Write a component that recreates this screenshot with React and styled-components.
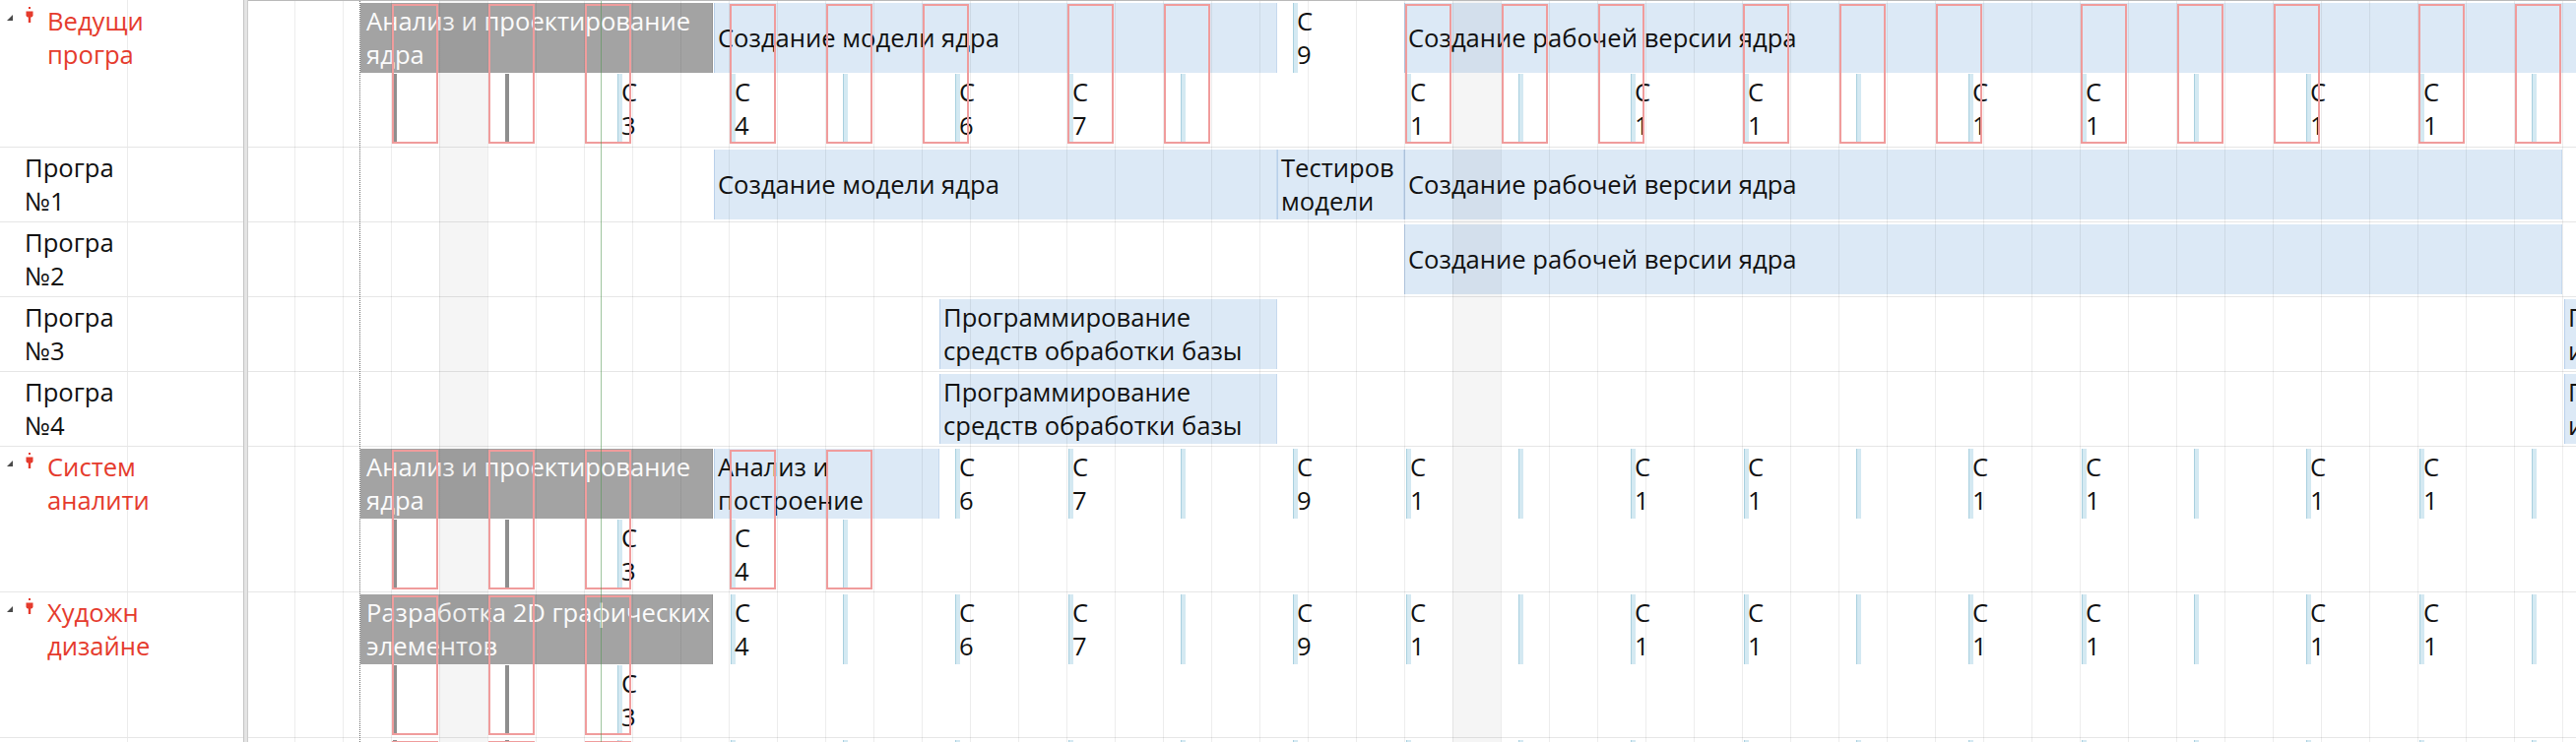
import React from "react";
import styled, { createGlobalStyle } from "styled-components";

const GlobalStyle = createGlobalStyle`
  html, body {
    margin: 0;
    padding: 0;
    background: #fff;
  }
  body {
    overflow: hidden;
    font-family: "Open Sans", "Noto Sans", sans-serif;
  }
`;

// page x where the chart canvas begins, and the day grid
const CHART_X = 252;
const DAY = 49;
const DAY0 = 250;

const StyledApp = styled.div`
  display: flex;
  width: 2616px;
  height: 754px;
  overflow: hidden;
  font-size: 25.6px;
  line-height: 34px;
  color: #111;
`;

const StyledLeftPanel = styled.div`
  flex: none;
  width: 247px;
  padding-top: 1px;
  display: flex;
  flex-direction: column;
  background-image: linear-gradient(
    to right,
    transparent 129px,
    #ececec 129px,
    #ececec 130px,
    transparent 130px
  );
`;

const StyledLeftRow = styled.div`
  flex: none;
  box-sizing: border-box;
  height: ${(p) => p.$h}px;
  border-bottom: 1px solid #e6e6e6;
  display: grid;
  grid-template-columns: ${(p) => (p.$lead ? "19px 22px 1fr" : "1fr")};
  align-items: start;
  padding-left: ${(p) => (p.$lead ? 7 : 25)}px;
  color: ${(p) => (p.$lead ? "#e53b2d" : "#111")};
`;

const StyledToggle = styled.span`
  width: 0;
  height: 0;
  margin-top: 14px;
  border-left: 6px solid transparent;
  border-bottom: 6px solid #4a4a4a;
`;

const StyledPerson = styled.svg`
  margin-top: 6px;
  display: block;
`;

const StyledName = styled.div`
  padding-top: 4px;
  white-space: pre;
`;

const StyledSplitter = styled.div`
  flex: none;
  width: 5px;
  box-sizing: border-box;
  border-left: 1px solid #c4c4c4;
  border-right: 1px solid #cdcdcd;
  background: #e4e4e4;
`;

const StyledChart = styled.div`
  position: relative;
  flex: 1;
  min-width: 0;
  overflow: hidden;
  border-top: 1px solid #b9b9b9;
  display: flex;
  flex-direction: column;
`;

const StyledChartRow = styled.div`
  position: relative;
  flex: none;
  box-sizing: border-box;
  height: ${(p) => p.$h}px;
  border-bottom: 1px solid #e6e6e6;
`;

const StyledBar = styled.div`
  position: absolute;
  top: 2px;
  height: 71px;
  box-sizing: border-box;
  display: flex;
  align-items: center;
  overflow: hidden;
  white-space: pre;
  padding-left: ${(p) => (p.$done ? 5 : 3)}px;
  padding-top: 1px;
  background: ${(p) => (p.$done ? "#a3a3a3" : "#dce9f6")};
  color: ${(p) => (p.$done ? "#fbfbfb" : "#111")};
  border-left: 1px solid ${(p) => (p.$done ? "#a3a3a3" : "#b9d0ea")};
  border-right: 1px solid ${(p) => (p.$done ? "#939393" : "#c6d9ee")};
`;

const StyledTick = styled.div`
  position: absolute;
  top: ${(p) => (p.$half === "top" ? 2 : 74)}px;
  height: 71px;
  width: ${(p) => (p.$done ? 4 : 5)}px;
  box-sizing: border-box;
  background: ${(p) => (p.$done ? "#8e8e8e" : "#d4e9f2")};
  border-left: 1px solid ${(p) => (p.$done ? "#8e8e8e" : "#a9d0df")};
`;

const StyledTickLabel = styled.div`
  position: absolute;
  left: 3px;
  top: 2px;
  white-space: pre;
  color: #111;
`;

const StyledConflict = styled.div`
  position: absolute;
  top: 3px;
  height: 142px;
  width: 47px;
  box-sizing: border-box;
  border: 2px solid #f09c9c;
`;

const StyledGridLines = styled.div`
  position: absolute;
  inset: 0;
  pointer-events: none;
  background-image: repeating-linear-gradient(
    to right,
    transparent 0,
    transparent 47px,
    rgba(0, 0, 0, 0.07) 47px,
    rgba(0, 0, 0, 0.07) 48px,
    transparent 48px,
    transparent 49px
  );
`;

const StyledShade = styled.div`
  position: absolute;
  top: 0;
  bottom: 0;
  width: ${DAY}px;
  background: rgba(0, 0, 0, 0.04);
  pointer-events: none;
`;

const StyledTodayLine = styled.div`
  position: absolute;
  top: 0;
  bottom: 0;
  width: 1px;
  background: rgba(80, 150, 80, 0.55);
  pointer-events: none;
`;

const StyledStartLine = styled.div`
  position: absolute;
  top: 0;
  bottom: 0;
  width: 0;
  border-left: 1px dotted #6e6e6e;
  pointer-events: none;
`;

const cx = (pageX) => pageX - CHART_X;

const LABELS = ["", "", "3", "4", "", "6", "7", "", "9", "1", "", "1", "1", "", "1", "1", "", "1", "1", ""];
const TICKS = LABELS.map((label, i) => ({
  i,
  x: Math.round(398.8 + 114.33 * i),
  label,
  done: i < 2,
}));

const gray = (x, w, text) => ({ x, w, text, done: true });
const blue = (x, w, text) => ({ x, w, text, done: false });

const ROWS = [
  {
    h: 149,
    lead: true,
    name: "Ведущи\nпрогра",
    bars: [
      gray(366, 358, "Анализ и проектирование\nядра"),
      blue(725, 572, "Создание модели ядра"),
      blue(1426, 1220, "Создание рабочей версии ядра"),
    ],
    half: (i) => (i === 8 ? "top" : "bottom"),
  },
  {
    h: 76,
    name: "Програ\n№1",
    bars: [
      blue(725, 572, "Создание модели ядра"),
      blue(1297, 129, "Тестиров\nмодели"),
      blue(1426, 1176, "Создание рабочей версии ядра"),
    ],
  },
  { h: 76, name: "Програ\n№2", bars: [blue(1426, 1176, "Создание рабочей версии ядра")] },
  {
    h: 76,
    name: "Програ\n№3",
    bars: [blue(954, 343, "Программирование\nсредств обработки базы"), blue(2604, 40, "П\nи")],
  },
  {
    h: 76,
    name: "Програ\n№4",
    bars: [blue(954, 343, "Программирование\nсредств обработки базы"), blue(2604, 40, "П\nи")],
  },
  {
    h: 148,
    lead: true,
    name: "Систем\nаналити",
    bars: [gray(366, 358, "Анализ и проектирование\nядра"), blue(725, 229, "Анализ и\nпостроение")],
    half: (i) => (i < 5 ? "bottom" : "top"),
  },
  {
    h: 148,
    lead: true,
    name: "Художн\nдизайне",
    bars: [gray(366, 358, "Разработка 2D графических\nэлементов")],
    half: (i) => (i < 3 ? "bottom" : "top"),
  },
  {
    h: 148,
    lead: true,
    name: "",
    bars: [],
    half: () => "top",
    extraConflicts: [0, 1, 2],
  },
];

const colLeft = (x) => DAY0 + Math.floor((x - DAY0) / DAY) * DAY + 1;

const PersonIcon = () => (
  <StyledPerson width="8" height="17" viewBox="0 0 8 17">
    <rect x="3" y="0" width="2" height="2" fill="#e53b2d" />
    <path d="M0.5 4.5 H7.5 V8.5 Q7.5 10.5 5.5 10.5 H2.5 Q0.5 10.5 0.5 8.5 Z" fill="#e53b2d" />
    <rect x="2.8" y="10" width="2.4" height="6" fill="#e53b2d" />
  </StyledPerson>
);

const LeftRow = ({ row }) => (
  <StyledLeftRow $h={row.h} $lead={row.lead}>
    {row.lead && row.name && <StyledToggle />}
    {row.lead && row.name && <PersonIcon />}
    <StyledName>{row.name}</StyledName>
  </StyledLeftRow>
);

const ChartRow = ({ row }) => {
  const ticks = row.half ? TICKS : [];
  const conflicts = ticks.filter(
    (t) => row.half(t.i) === "bottom" || (row.extraConflicts || []).includes(t.i)
  );
  return (
    <StyledChartRow $h={row.h}>
      {row.bars.map((b, n) => (
        <StyledBar key={n} $done={b.done} style={{ left: cx(b.x), width: b.w }}>
          <div>{b.text}</div>
        </StyledBar>
      ))}
      {ticks.map((t) => (
        <StyledTick key={t.i} $done={t.done} $half={row.half(t.i)} style={{ left: cx(t.x) }}>
          {t.label && <StyledTickLabel>{"С\n" + t.label}</StyledTickLabel>}
        </StyledTick>
      ))}
      {conflicts.map((t) => (
        <StyledConflict key={t.i} style={{ left: cx(colLeft(t.x)) }} />
      ))}
    </StyledChartRow>
  );
};

const App = () => (
  <StyledApp>
    <GlobalStyle />
    <StyledLeftPanel>
      {ROWS.map((row, n) => (
        <LeftRow key={n} row={row} />
      ))}
    </StyledLeftPanel>
    <StyledSplitter />
    <StyledChart>
      {ROWS.map((row, n) => (
        <ChartRow key={n} row={row} />
      ))}
      <StyledGridLines />
      <StyledShade style={{ left: cx(DAY0 + 4 * DAY) }} />
      <StyledShade style={{ left: cx(DAY0 + 25 * DAY) }} />
      <StyledStartLine style={{ left: cx(365) }} />
      <StyledTodayLine style={{ left: cx(610) }} />
    </StyledChart>
  </StyledApp>
);

export default App;
